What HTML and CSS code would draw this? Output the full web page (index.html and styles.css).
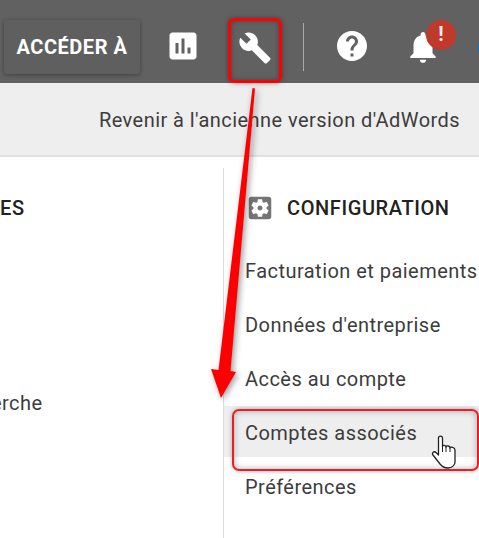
FILE: index.html
```html
<!DOCTYPE html>
<html lang="fr">
<head>
<meta charset="utf-8">
<title>AdWords</title>
<link rel="stylesheet" href="styles.css">
</head>
<body>
<div class="page">
  <header class="topbar">
    <button class="goto">ACCÉDER À</button>
    <svg class="icon icon-chart" viewBox="0 0 24 24"><path d="M19 3H5c-1.1 0-2 .9-2 2v14c0 1.1.9 2 2 2h14c1.1 0 2-.9 2-2V5c0-1.1-.9-2-2-2zM9 17H7v-7h2v7zm4 0h-2V7h2v10zm4 0h-2v-4h2v4z"/></svg>
    <svg class="icon icon-wrench" viewBox="0 0 24 24"><path d="M22.7 19l-9.1-9.1c.9-2.3.4-5-1.500-6.900-2-2-5-2.400-7.400-1.300L9 6 6 9 1.600 4.700C.4 7.100.9 10.100 2.900 12.100c1.900 1.900 4.600 2.400 6.900 1.500l9.100 9.100c.4.4 1 .4 1.400 0l2.300-2.300c.5-.4.5-1.100.1-1.400z"/></svg>
    <span class="sep"></span>
    <svg class="icon icon-help" viewBox="0 0 24 24"><path d="M12 2C6.480 2 2 6.480 2 12s4.480 10 10 10 10-4.480 10-10S17.520 2 12 2zm1 17h-2v-2h2v2zm2.070-7.750l-.9.920C13.450 12.900 13 13.500 13 15h-2v-.5c0-1.100.45-2.100 1.170-2.830l1.240-1.260c.37-.36.59-.86.59-1.410 0-1.100-.9-2-2-2s-2 .9-2 2H8c0-2.210 1.790-4 4-4s4 1.790 4 4c0 .88-.36 1.680-.93 2.250z"/></svg>
    <svg class="icon icon-bell" viewBox="0 0 24 24"><path d="M12 22c1.100 0 2-.9 2-2h-4c0 1.100.9 2 2 2zm6-6v-5c0-3.070-1.630-5.640-4.500-6.320V4c0-.83-.67-1.500-1.500-1.500s-1.500.67-1.500 1.500v.68C7.640 5.360 6 7.920 6 11v5l-2 2v1h16v-1l-2-2z"/></svg>
    <span class="badge">!</span>
    <span class="sliver"></span>
  </header>
  <div class="subbar">Revenir à l'ancienne version d'AdWords</div>
  <main class="menu">
    <section class="col-left">
      <h2 class="col-title-clip">ES</h2>
      <p class="clip-link">erche</p>
    </section>
    <section class="col-right">
      <h2 class="col-title">
        <svg class="gear" viewBox="0 0 24 24"><path d="M12 10c-1.100 0-2 .9-2 2s.9 2 2 2 2-.9 2-2-.9-2-2-2zm7-7H5c-1.110 0-2 .9-2 2v14c0 1.100.89 2 2 2h14c1.110 0 2-.9 2-2V5c0-1.100-.89-2-2-2zm-1.750 9c0 .23-.02.46-.05.68l1.480 1.160c.13.11.17.3.08.45l-1.400 2.420c-.09.15-.27.21-.43.15l-1.740-.7c-.36.28-.76.51-1.180.69l-.26 1.850c-.03.17-.18.3-.35.3h-2.800c-.17 0-.32-.13-.35-.29l-.26-1.850c-.43-.18-.82-.41-1.180-.69l-1.740.7c-.16.06-.34 0-.43-.15l-1.400-2.420c-.09-.15-.05-.34.08-.45l1.480-1.160c-.03-.23-.05-.46-.05-.69 0-.23.02-.46.05-.68l-1.480-1.160c-.13-.11-.17-.3-.08-.45l1.400-2.420c.09-.15.27-.21.43-.15l1.740.7c.36-.28.76-.51 1.180-.69l.26-1.850c.03-.17.18-.3.35-.3h2.800c.17 0 .32.13.35.29l.26 1.850c.43.18.82.41 1.180.69l1.740-.7c.16-.06.34 0 .43.15l1.400 2.420c.09.15.05.34-.08.45l-1.480 1.160c.03.23.05.46.05.69z"/></svg>
        <span>CONFIGURATION</span>
      </h2>
      <ul class="links">
        <li>Facturation et paiements</li>
        <li>Données d'entreprise</li>
        <li>Accès au compte</li>
        <li class="hover">Comptes associés</li>
        <li>Préférences</li>
      </ul>
    </section>
  </main>

  <div class="mark mark-wrench"></div>
  <div class="mark mark-row"></div>
  <svg class="arrow" viewBox="0 0 479 538" width="479" height="538">
    <path d="M252.500 88 L255 88.500 L230.500 371 L236 372 L221 398 L211 369 L218.500 370 Z"/>
  </svg>
  <svg class="hand" viewBox="0 0 26 34" width="26" height="34">
    <path d="M7.500 20 V3 C7.500 .4 11.500 .4 11.500 3 V11.500 C11.500 10 15 10 15 12 C15.500 10.500 19 10.500 19 13 C19.500 11.500 24 12 24 15 V27 C24 30 21 33 17 33 C13 33 11 31.500 9 29 L2 20 C.5 18 3 15.500 5 17.500 Z"/>
    <path class="hand-line" d="M11.500 11.500 V17 M15 12 V17 M19 13 V17"/>
  </svg>
</div>
</body>
</html>
```
FILE: styles.css
```css
* { box-sizing: border-box; }
html, body { margin: 0; padding: 0; }
body { font-family: Roboto, "Liberation Sans", sans-serif; background: #fff; }
.page { position: relative; width: 479px; height: 538px; overflow: hidden; }

.topbar { position: relative; height: 83px; background: #616161; padding: 20px 0 0 4px; display: flex; align-items: flex-start; }
.goto { width: 136px; height: 54px; border: 0; border-radius: 3px; background: #5f5f5f; color: #fff; font: 700 20px Roboto, sans-serif; letter-spacing: .55px; padding: 0; box-shadow: 0 1px 4px rgba(0,0,0,.35); }
.icon { position: absolute; fill: #fff; }
.icon-chart { left: 165px; top: 28px; width: 36px; height: 36px; }
.icon-wrench { left: 238px; top: 31px; width: 34px; height: 34px; }
.icon-help { left: 334px; top: 28px; width: 36px; height: 36px; }
.icon-bell { left: 404px; top: 28px; width: 38px; height: 38px; }
.sep { position: absolute; left: 303px; top: 23px; width: 1px; height: 48px; background: #a9a9a9; }
.badge { position: absolute; left: 426px; top: 20px; width: 30px; height: 30px; border-radius: 50%; background: #c0392b; color: #eee; font: 700 20px/29px Roboto, sans-serif; text-align: center; }
.sliver { position: absolute; right: 0; top: 42px; width: 1px; height: 10px; background: #1a6fb5; }

.subbar { height: 74px; background: #eeeeee; border-bottom: 2px solid #e2e2e2; padding: 2px 19px 0 0; display: flex; align-items: center; justify-content: flex-end; font-size: 20px; color: #3c3c3c; letter-spacing: .44px; }

.menu { display: flex; padding-top: 11px; }
.col-left { width: 224px; height: 370px; border-right: 1px solid #dcdcdc; overflow: hidden; }
.col-title-clip { margin: 29px 0 0; font: 500 20px/22px Roboto, sans-serif; color: #212121; letter-spacing: .6px; }
.clip-link { margin: 172px 0 0 -9px; font-size: 20px; line-height: 24px; color: #3c3c3c; letter-spacing: .44px; }
.col-right { flex: 1; padding: 29px 0 0 0; }
.col-title { display: flex; align-items: center; height: 22px; margin: 0 0 0 24px; font: 500 20px/22px Roboto, sans-serif; color: #212121; letter-spacing: .6px; }
.gear { width: 30px; height: 30px; margin-left: -3px; margin-right: 12px; flex: none; fill: #757575; }
.links { list-style: none; margin: 25px 0 0; padding: 0; }
.links li { height: 54px; padding-left: 21px; font-size: 20px; line-height: 54px; color: #3c3c3c; letter-spacing: .46px; white-space: nowrap; }
.links .hover { background: #eeeeee; height: 51px; margin-bottom: 3px; line-height: 54px; }

.mark { position: absolute; border: 3px solid #f00; border-radius: 6px; box-shadow: 0 0 5px rgba(0,0,0,.35), inset 0 0 5px rgba(0,0,0,.3); }
.mark-wrench { left: 228px; top: 18px; width: 54px; height: 65px; }
.mark-row { left: 232px; top: 409px; width: 247px; height: 62px; border-width: 2px; border-color: #ee1c25; border-radius: 7px; box-shadow: 0 0 4px rgba(0,0,0,.3), inset 0 0 6px rgba(0,0,0,.3); }
.arrow { position: absolute; left: 0; top: 0; fill: #f00; filter: drop-shadow(2px 2px 3px rgba(0,0,0,.4)); }
.hand { position: absolute; left: 431px; top: 435px; fill: #fff; stroke: #222; stroke-width: 1.300; stroke-linejoin: round; }
.hand-line { fill: none; stroke-width: 1; }
```
